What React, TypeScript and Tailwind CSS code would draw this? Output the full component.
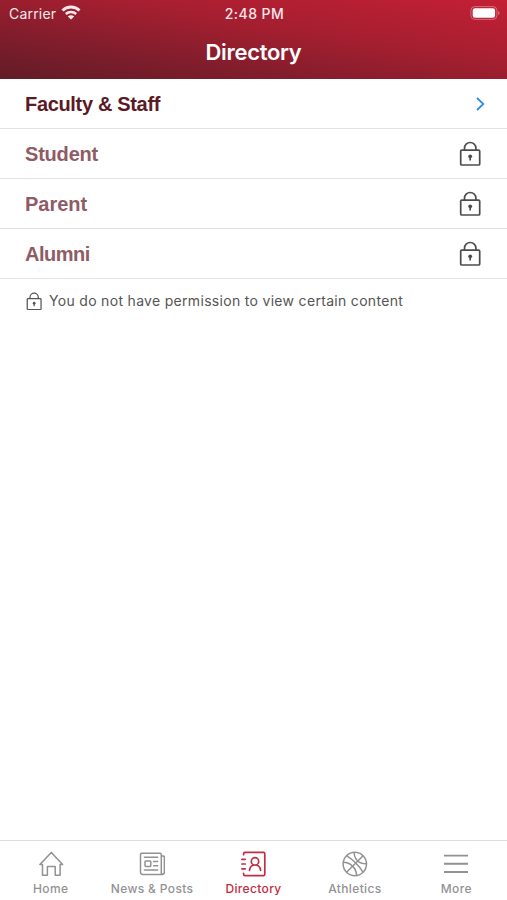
import type { ReactNode } from "react";

interface Row {
  label: string;
  locked: boolean;
  spacing: string;
}

interface Tab {
  label: string;
  icon: ReactNode;
}

const rows: Row[] = [
  { label: "Faculty & Staff", locked: false, spacing: "tracking-[-0.33px]" },
  { label: "Student", locked: true, spacing: "tracking-[-0.2px]" },
  { label: "Parent", locked: true, spacing: "tracking-normal" },
  { label: "Alumni", locked: true, spacing: "tracking-[-0.5px]" },
];

const LockIcon = ({ className }: { className: string }) => (
  <svg
    className={className}
    viewBox="0 0 22 26"
    fill="none"
    stroke="currentColor"
    strokeWidth="1.7"
  >
    <rect x="1.7" y="9.1" width="19" height="14.9" rx="1.1" />
    <path d="M5.5 9.1V7.2a5.7 5.7 0 0 1 11.4 0v1.9" />
    <circle cx="11.2" cy="15.3" r="1.9" fill="currentColor" stroke="none" />
    <path d="M11.2 15.5v4" />
  </svg>
);

const HomeIcon = () => (
  <svg
    className="size-[26px]"
    viewBox="0 0 26 26"
    fill="none"
    stroke="currentColor"
    strokeWidth="1.5"
    strokeLinejoin="round"
    strokeLinecap="round"
  >
    <path d="M1.9 13.6 13.3 1.4l11.3 12.2h-2.5v10.7h-4.9v-8.8H9.4v8.8H4.5V13.6z" />
  </svg>
);

const NewsIcon = () => (
  <svg
    className="size-[26px]"
    viewBox="0 0 26 26"
    fill="none"
    stroke="currentColor"
    strokeWidth="1.5"
    strokeLinejoin="round"
    strokeLinecap="round"
  >
    <path d="M22.3 5h1.9a1.2 1.2 0 0 1 1.2 1.2v15a2.2 2.2 0 0 1-2.2 2.2H3.7a2.2 2.2 0 0 1-2.2-2.2V3.4a1.2 1.2 0 0 1 1.2-1.2h18.4a1.2 1.2 0 0 1 1.2 1.2v17.9a1.5 1.5 0 0 0 1 1.9" />
    <path d="M5.4 6.3h13.3M5.4 19h13.3M14.6 10.4h4.1M14.6 14.8h4.1" />
    <rect x="6" y="10" width="5.8" height="5.4" rx=".8" />
  </svg>
);

const DirectoryIcon = () => (
  <svg
    className="size-[26px]"
    viewBox="0 0 26 26"
    fill="none"
    stroke="currentColor"
    strokeWidth="1.7"
    strokeLinecap="round"
  >
    <path d="M3.6 3.7V2.8A1.4 1.4 0 0 1 5 1.4h18.4a1.4 1.4 0 0 1 1.4 1.4v20.4a1.4 1.4 0 0 1-1.4 1.4H5a1.4 1.4 0 0 1-1.4-1.4v-.9" />
    <path d="M1.9 8.3h3.3M1.9 13h3.3M1.9 17.8h3.3" />
    <circle cx="15" cy="10.4" r="3.7" />
    <path d="M9.5 19.5c.2-3.1 1.8-4.7 3.8-5.3M20.6 19.5c-.2-3.1-1.8-4.7-3.8-5.3" />
  </svg>
);

const BasketballIcon = () => (
  <svg
    className="size-[26px]"
    viewBox="0 0 26 26"
    fill="none"
    stroke="currentColor"
    strokeWidth="1.5"
  >
    <circle cx="12.8" cy="13" r="11.7" />
    <path d="M4.5 4.7C9.8 8 16.8 14.5 21.1 21.3M4.5 21.3 21.1 4.7" />
    <path d="M12.1 1.3c.2 7 4.7 11.6 12.4 11.4M1.2 11.3c7.2.2 13.2 5.5 13.4 13.3" />
  </svg>
);

const MoreIcon = () => (
  <svg
    className="size-[26px]"
    viewBox="0 0 26 26"
    fill="none"
    stroke="currentColor"
    strokeWidth="1.9"
  >
    <path d="M1 4.6h24M1 12.8h24M1 21h24" />
  </svg>
);

const tabs: Tab[] = [
  { label: "Home", icon: <HomeIcon /> },
  { label: "News & Posts", icon: <NewsIcon /> },
  { label: "Directory", icon: <DirectoryIcon /> },
  { label: "Athletics", icon: <BasketballIcon /> },
  { label: "More", icon: <MoreIcon /> },
];

const StatusBar = () => (
  <div className="grid h-[26px] grid-cols-3 items-center pr-[7px] pl-[9px] text-[14px] text-white/90">
    <div className="flex items-center gap-[5px]">
      <span className="tracking-[0.2px]">Carrier</span>
      <svg
        className="-mt-0.5 h-[15px] w-5"
        viewBox="0 0 20 15"
        fill="none"
        stroke="currentColor"
      >
        <path d="M1.5 5.5a12.2 12.2 0 0 1 17 0" strokeWidth="2.9" />
        <path d="M4.8 9a7.6 7.6 0 0 1 10.4 0" strokeWidth="2.6" />
        <path
          d="M10 14.6 6.8 11.6a4.5 4.5 0 0 1 6.4 0z"
          fill="currentColor"
          stroke="none"
        />
      </svg>
    </div>
    <span className="text-center font-medium tracking-[0.45px]">2:48 PM</span>
    <svg
      className="h-[14px] w-[30px] justify-self-end"
      viewBox="0 0 30 14"
      fill="none"
    >
      <rect
        x=".9"
        y=".6"
        width="26"
        height="12.8"
        rx="3.8"
        stroke="white"
        strokeOpacity=".35"
      />
      <rect x="2.7" y="2.3" width="22.4" height="9.4" rx="2.2" fill="white" />
      <path d="M28.2 4.8c1.8.7 1.8 3.7 0 4.4z" fill="white" fillOpacity=".4" />
    </svg>
  </div>
);

const App: React.FC = () => {
  const activeTab = "Directory";

  return (
    <div className="flex h-[900px] w-[507px] flex-col overflow-hidden bg-white font-['Inter',sans-serif]">
      <header className="h-[79px] shrink-0 bg-[linear-gradient(to_top_right,#621c27_0%,#821d2c_30%,#a51f30_60%,#c41f35_100%)]">
        <StatusBar />
        <h1 className="mt-2.5 text-center text-[22px] leading-8 font-semibold tracking-[-0.3px] text-white">
          Directory
        </h1>
      </header>

      <main className="flex-1">
        <ul>
          {rows.map((row) => (
            <li
              key={row.label}
              className="flex h-[50.1px] items-center justify-between border-b border-[#e2e2e2] pr-[26px] pl-[25px]"
            >
              <span
                className={`font-['Liberation_Sans',sans-serif] text-[20px] font-bold ${row.spacing} ${
                  row.locked ? "text-[#8f5b65]" : "text-[#5b1925]"
                }`}
              >
                {row.label}
              </span>
              {row.locked ? (
                <LockIcon className="h-[26px] w-[22px] text-[#4c4c4c]" />
              ) : (
                <svg
                  className="-mr-1 h-[14px] w-[9px] text-[#2b8be6]"
                  viewBox="0 0 9 14"
                  fill="none"
                  stroke="currentColor"
                  strokeWidth="1.8"
                >
                  <path d="m1 .8 6.3 6.2L1 13.2" />
                </svg>
              )}
            </li>
          ))}
        </ul>
        <div className="mt-3 flex items-center pl-[26px] text-[#555]">
          <LockIcon className="h-[19px] w-4" />
          <p className="ml-[7px] text-[14px] leading-5 tracking-[0.31px]">
            You do not have permission to view certain content
          </p>
        </div>
      </main>

      <nav className="grid h-[60px] shrink-0 grid-cols-5 border-t border-[#dedede] pt-[10px]">
        {tabs.map((tab) => (
          <button
            key={tab.label}
            type="button"
            className={
              tab.label === activeTab
                ? "flex flex-col items-center text-[#c12c41]"
                : "flex flex-col items-center text-[#929295]"
            }
          >
            {tab.icon}
            <span className="mt-1 text-[12px] leading-4 font-medium tracking-[0.35px] whitespace-nowrap">
              {tab.label}
            </span>
          </button>
        ))}
      </nav>
    </div>
  );
};

export default App;
